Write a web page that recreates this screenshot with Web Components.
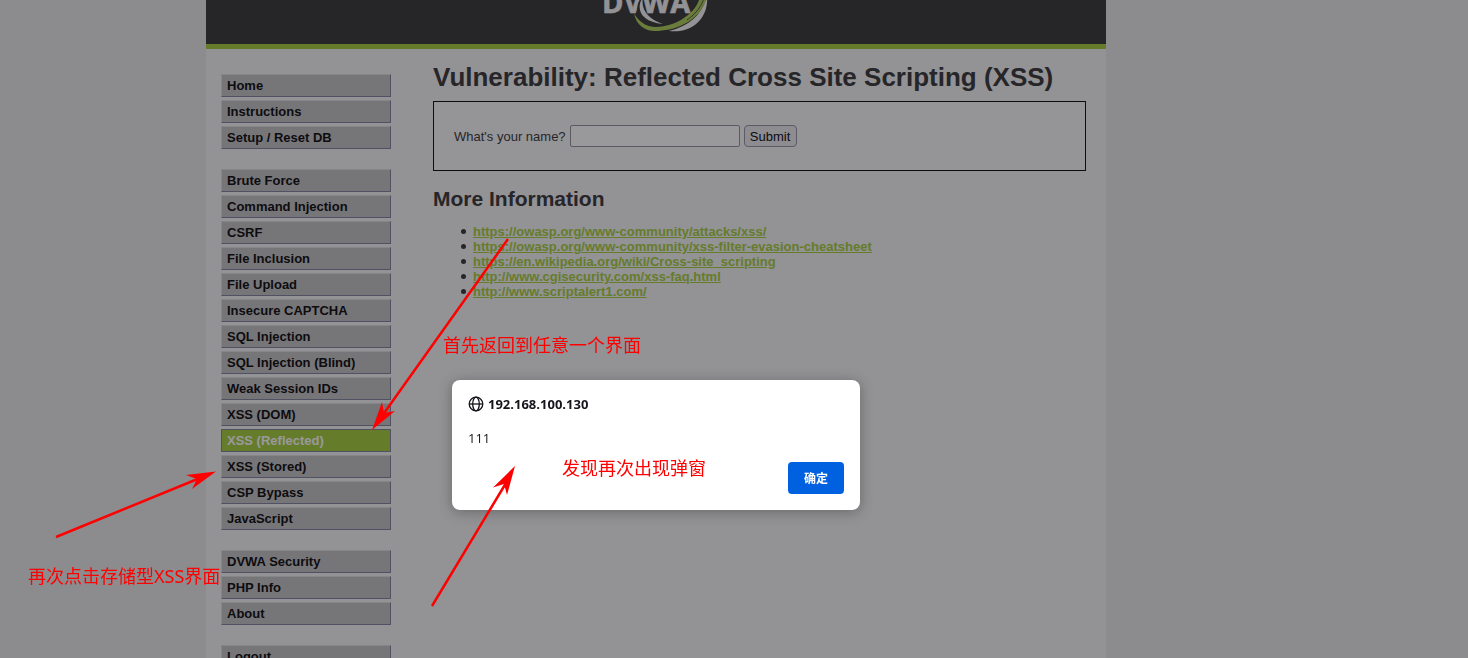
<!DOCTYPE html>
<html lang="en">
<head>
<meta charset="utf-8">
<title>Vulnerability: Reflected Cross Site Scripting (XSS)</title>
<style>
  body {
    margin: 0;
    height: 100vh;
    overflow: hidden;
    background: #e7e7e7;
    color: #2f2f2f;
    font: 13px/15px "Liberation Sans", Arial, sans-serif;
  }
</style>
</head>
<body>
<dvwa-page>
  <dvwa-header slot="header"></dvwa-header>
  <dvwa-menu slot="menu">
    <menu-group>
      <menu-item>Home</menu-item>
      <menu-item>Instructions</menu-item>
      <menu-item>Setup / Reset DB</menu-item>
    </menu-group>
    <menu-group>
      <menu-item>Brute Force</menu-item>
      <menu-item>Command Injection</menu-item>
      <menu-item>CSRF</menu-item>
      <menu-item>File Inclusion</menu-item>
      <menu-item>File Upload</menu-item>
      <menu-item>Insecure CAPTCHA</menu-item>
      <menu-item>SQL Injection</menu-item>
      <menu-item>SQL Injection (Blind)</menu-item>
      <menu-item>Weak Session IDs</menu-item>
      <menu-item>XSS (DOM)</menu-item>
      <menu-item selected>XSS (Reflected)</menu-item>
      <menu-item>XSS (Stored)</menu-item>
      <menu-item>CSP Bypass</menu-item>
      <menu-item>JavaScript</menu-item>
    </menu-group>
    <menu-group>
      <menu-item>DVWA Security</menu-item>
      <menu-item>PHP Info</menu-item>
      <menu-item>About</menu-item>
    </menu-group>
    <menu-group>
      <menu-item>Logout</menu-item>
    </menu-group>
  </dvwa-menu>
  <dvwa-body>
    <span slot="title">Vulnerability: Reflected Cross Site Scripting (XSS)</span>
    <name-form></name-form>
    <more-info></more-info>
  </dvwa-body>
</dvwa-page>
<alert-dialog host="192.168.100.130">111</alert-dialog>
<note-layer></note-layer>

<script>
(function() {
  'use strict';

  function define(name, html, setup) {
    customElements.define(name, class extends HTMLElement {
      constructor() {
        super();
        this.attachShadow({mode: 'open'}).innerHTML = html;
      }
      connectedCallback() {
        if (setup) setup(this, this.shadowRoot);
      }
    });
  }

  define('dvwa-page', `
    <style>
      :host {
        display: block;
        margin: 0 362px 0 206px;
        min-height: 100vh;
        background: #f4f4f4;
      }
      #columns {
        display: grid;
        grid-template-columns: 170px 1fr;
        gap: 42px;
        padding: 0 20px 0 15px;
      }
    </style>
    <slot name="header"></slot>
    <div id="columns">
      <slot name="menu"></slot>
      <slot></slot>
    </div>
  `);

  define('dvwa-header', `
    <style>
      :host {
        display: flex;
        justify-content: center;
        align-items: flex-end;
        height: 44px;
        overflow: hidden;
        background: #2f2f2f;
        border-bottom: 5px solid #a1cc33;
      }
      svg {
        display: block;
        flex: none;
      }
    </style>
    <svg width="112" height="60" viewBox="600 -16 112 60" role="img" aria-label="DVWA">
      <text x="602" y="13" font-family="Open Sans, sans-serif" font-size="29" font-weight="700" fill="#f4f4f4" stroke="#f4f4f4" stroke-width=".6">DVWA</text>
      <path d="M646-6C639 0 636 8 640 16" fill="none" stroke="#2f2f2f" stroke-width="2"/>
      <path d="M643-3C635 9 641 22 663 24C651 20 640 12 643-3Z" fill="#f4f4f4"/>
      <path d="M634 13C636 25 645 31 655 31C674 31 701 22 707-4L700-4C697 14 674 27 656 27C646 27 638 21 634 13Z" fill="#a8cc50"/>
      <path d="M687 20C697 13 702 5 704-2" fill="none" stroke="#2f2f2f" stroke-width=".8"/>
      <path d="M669 31C690 26 703 13 707-4C709 18 692 34 669 31Z" fill="#f4f4f4"/>
    </svg>
  `);

  define('dvwa-menu', `
    <style>
      :host {
        display: flex;
        flex-direction: column;
        gap: 20px;
        padding-top: 25px;
      }
    </style>
    <slot></slot>
  `);

  define('menu-group', `
    <style>
      :host {
        display: flex;
        flex-direction: column;
        gap: 3px;
      }
    </style>
    <slot></slot>
  `);

  define('menu-item', `
    <style>
      :host {
        display: block;
      }
      a {
        display: block;
        padding: 3px 5px;
        border: 1px solid;
        border-color: #ddd #7a7f9a #7a7f9a #ddd;
        background: #c0c0c0;
        color: #000;
        font-weight: bold;
        text-decoration: none;
      }
      :host([selected]) a {
        border-color: #7a7f9a;
        background: #a1cc33;
        color: #fff;
      }
    </style>
    <a href="#"><slot></slot></a>
  `);

  define('dvwa-body', `
    <style>
      :host {
        display: block;
        padding-top: 13px;
      }
      h1 {
        margin: 0 0 9px;
        font-size: 26px;
        line-height: 30px;
        white-space: nowrap;
      }
    </style>
    <h1><slot name="title"></slot></h1>
    <slot></slot>
  `);

  define('name-form', `
    <style>
      :host {
        display: block;
      }
      form {
        display: flex;
        align-items: center;
        gap: 4px;
        padding: 23px 20px;
        border: 1px solid #000;
        background: #f8f8f8;
      }
      input, button {
        box-sizing: border-box;
        height: 22px;
        margin: 0;
        border: 1px solid #8f8f9d;
        font: inherit;
      }
      input {
        width: 170px;
        border-radius: 2px;
        background: #fff;
      }
      button {
        width: 53px;
        padding: 0;
        border-radius: 4px;
        background: #e9e9ed;
        color: #000;
      }
    </style>
    <form>
      <label for="name">What's your name?</label>
      <input type="text" id="name">
      <button type="button">Submit</button>
    </form>
  `);

  define('more-info', `
    <style>
      :host {
        display: block;
      }
      h2 {
        margin: 16px 0 13px;
        font-size: 21px;
        line-height: 24px;
      }
      ul {
        margin: 0;
        padding-left: 28px;
        list-style: none;
      }
      li {
        display: flex;
        align-items: center;
        gap: 7px;
      }
      li::before {
        content: "";
        width: 5px;
        height: 5px;
        border-radius: 50%;
        background: #2f2f2f;
      }
      a {
        color: #a1cc33;
        font-weight: bold;
      }
    </style>
    <h2>More Information</h2>
    <ul></ul>
  `, (el, root) => {
    const links = [
      'https://owasp.org/www-community/attacks/xss/',
      'https://owasp.org/www-community/xss-filter-evasion-cheatsheet',
      'https://en.wikipedia.org/wiki/Cross-site_scripting',
      'http://www.cgisecurity.com/xss-faq.html',
      'http://www.scriptalert1.com/'
    ];
    root.querySelector('ul').innerHTML =
      links.map(url => `<li><a href="${url}">${url}</a></li>`).join('');
  });

  // modal alert, with the backdrop that dims the page
  define('alert-dialog', `
    <style>
      :host {
        position: fixed;
        inset: 0;
        background: rgba(28, 27, 34, .45);
        font-family: "Open Sans", "Noto Sans CJK SC", sans-serif;
        font-size: 13px;
        line-height: 18px;
        color: #15141a;
      }
      #box {
        position: absolute;
        left: 452px;
        top: 380px;
        box-sizing: border-box;
        width: 408px;
        padding: 15px 16px 16px;
        border-radius: 8px;
        background: #fff;
        box-shadow: 0 2px 14px rgba(0, 0, 0, .3);
      }
      #head {
        display: flex;
        align-items: center;
        gap: 4px;
        font-weight: bold;
      }
      #text {
        margin: 16px 0 15px;
      }
      #actions {
        display: flex;
        justify-content: flex-end;
      }
      button {
        width: 56px;
        height: 32px;
        padding: 0;
        border: 0;
        border-radius: 4px;
        background: #0061e0;
        color: #fff;
        font: bold 12px/18px "Noto Sans CJK SC", sans-serif;
      }
    </style>
    <div id="box" role="alertdialog" aria-labelledby="host">
      <div id="head">
        <svg width="16" height="16" viewBox="0 0 16 16" fill="none" stroke="#15141a" stroke-width="1.300">
          <circle cx="8" cy="8" r="6.800"/>
          <ellipse cx="8" cy="8" rx="3.300" ry="6.800"/>
          <path d="M1.200 8h13.600"/>
        </svg>
        <span id="host"></span>
      </div>
      <div id="text"><slot></slot></div>
      <div id="actions"><button type="button">确定</button></div>
    </div>
  `, (el, root) => {
    root.querySelector('#host').textContent = el.getAttribute('host');
  });

  // red arrows and remarks over everything
  define('note-layer', `
    <style>
      :host {
        position: fixed;
        inset: 0;
        overflow: hidden;
        pointer-events: none;
        color: #f00;
        font: 18px/24px "Noto Sans", "Noto Sans CJK SC", sans-serif;
      }
      svg {
        position: absolute;
        left: 0;
        top: 0;
      }
      span {
        position: absolute;
        white-space: nowrap;
      }
      #back { left: 443px; top: 333px; }
      #popup { left: 562px; top: 456px; }
      #stored { left: 28px; top: 564px; }
    </style>
    <svg width="1468" height="658" fill="#f00" stroke="#f00">
      <path d="M508 239L382 416M56 537L200 478M432 606L506 483" stroke-width="2.500"/>
      <path d="M372 430L382 402L384 413L395 411ZM216 471.500L186 475L197 479L192 489ZM515 466L493 487.500L504 484L507 495Z" stroke="none"/>
    </svg>
    <span id="back">首先返回到任意一个界面</span>
    <span id="popup">发现再次出现弹窗</span>
    <span id="stored">再次点击存储型XSS界面</span>
  `);
})();
</script>
</body>
</html>
